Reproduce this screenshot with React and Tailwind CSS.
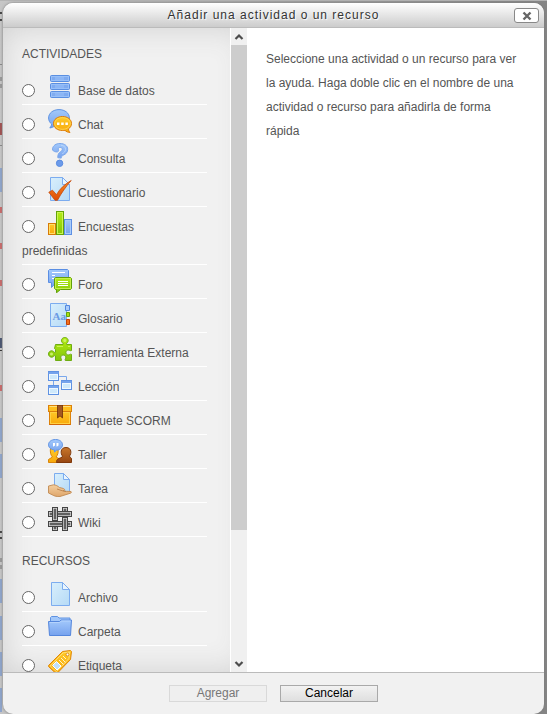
function Icon({ children }) {
  return (
    <svg
      viewBox="0 0 24 24"
      aria-hidden="true"
      className="mr-1.5 ml-[13px] inline-block h-6 w-6 align-[-4px]"
    >
      {children}
    </svg>
  );
}

function Gradients() {
  return (
    <svg className="absolute h-0 w-0" aria-hidden="true">
      <defs>
        <linearGradient id="blue" x1="0" y1="0" x2="0" y2="1">
          <stop offset="0" stopColor="#a3c9fb" />
          <stop offset="1" stopColor="#76a2ee" />
        </linearGradient>
        <linearGradient id="paper" x1="0" y1="0" x2="1" y2="1">
          <stop offset="0" stopColor="#d9effc" />
          <stop offset="1" stopColor="#b5daf6" />
        </linearGradient>
        <linearGradient id="gold" x1="0" y1="0" x2="0" y2="1">
          <stop offset="0" stopColor="#ffcb28" />
          <stop offset="1" stopColor="#f8a80c" />
        </linearGradient>
        <linearGradient id="green" x1="0" y1="0" x2="0" y2="1">
          <stop offset="0" stopColor="#b5ec14" />
          <stop offset="1" stopColor="#83c60a" />
        </linearGradient>
        <linearGradient id="orange" x1="0" y1="0" x2="0" y2="1">
          <stop offset="0" stopColor="#fb8b26" />
          <stop offset="1" stopColor="#dc4c06" />
        </linearGradient>
        <linearGradient id="brown" x1="0" y1="0" x2="0" y2="1">
          <stop offset="0" stopColor="#c8762a" />
          <stop offset="1" stopColor="#974611" />
        </linearGradient>
        <linearGradient id="skin" x1="0" y1="0" x2="0" y2="1">
          <stop offset="0" stopColor="#f4cf9f" />
          <stop offset="1" stopColor="#dfa66c" />
        </linearGradient>
      </defs>
    </svg>
  );
}

const Database = () => (
  <Icon>
    {[0.5, 8.5, 16.5].map((y) => (
      <g key={y}>
        <rect x="2.5" y={y} width="19" height="6" rx="1" fill="#709ee9" stroke="#5a8fe2" />
        <rect x="3.5" y={y + 1} width="17" height="4" fill="#7fabf0" stroke="#98c0f8" />
        <rect x="7" y={y + 1.5} width="9" height="3" fill="#8cb6f5" />
      </g>
    ))}
  </Icon>
);

const ChatIcon = () => (
  <Icon>
    <path d="M11 .6c6 0 10.400 3.600 10.400 8.400S17 17.400 11 17.400c-1.500 0-3-.3-4.200-.7-1.300 1.300-3 2-5 2.200 1-1 1.700-2.300 1.800-3.800C1.700 13.600.6 11.400.6 9 .6 4.200 5 .6 11 .6z" fill="url(#blue)" stroke="#5f93e2" />
    <path d="M14.500 7.500c5.200 0 9 3 9 7 0 2.300-1.200 4.100-3 5.400 0 1.400.6 2.500 1.500 3.500-2 0-3.800-.7-5-2.100-.8.200-1.600.2-2.500.2-5.200 0-9-3-9-7s3.800-7 9-7z" fill="url(#gold)" stroke="#dc7c0a" />
    <path d="M14.500 8.700c4.500 0 7.800 2.500 7.800 5.800s-3.300 5.800-7.800 5.800-7.800-2.500-7.800-5.800 3.300-5.800 7.800-5.800z" fill="none" stroke="#ffda5e" strokeWidth=".8" />
    <path d="M9 13.500h2.500v2.500H9zM13.200 13.500h2.500v2.500h-2.500zM17.400 13.500h2.500v2.500h-2.500z" fill="#fff" />
  </Icon>
);

const Question = () => (
  <Icon>
    <path d="M4.500 5.800C5 2.500 8 .5 12 .5c4.500 0 7.700 2.300 7.700 5.900 0 3-1.800 4.500-4.200 5.700-1.600.8-2.200 1.500-2.300 3l-3.400-.4c-.2-3 .9-4.700 2.700-6 1.200-.9 1.800-1.500 1.800-2.500 0-1.200-.9-1.800-2.200-1.800-1.200 0-1.800.6-1.800 1.500 0 .7.300 1.200.3 1.700 0 1-.9 1.500-2.500 1.300-2.200-.2-3.800-1.300-3.600-3.100z" fill="url(#blue)" stroke="#7ba7ea" />
    <path d="M13 2.300c3 .2 4.600 1.800 4.500 4.100-.1 2-1.200 3.200-3.200 4.300" fill="none" stroke="#b9d6fb" />
    <circle cx="11.600" cy="20.300" r="3.200" fill="#6c9bea" stroke="#5a8ce0" />
  </Icon>
);

const Paper = ({ x = 3 }) => (
  <g>
    <path d={`M${x - 0.5} .5H14.500L21.500 7.500V23.500H${x - 0.5}z`} fill="url(#paper)" stroke="#7cacef" />
    <path d="M14.500 .5V7.500H21.500z" fill="#e9f5fe" stroke="#7cacef" />
  </g>
);

const Quiz = () => (
  <Icon>
    <Paper />
    <path d="M.8 15.200l3.700-2 4 4.500C12 11.500 17 7 23.200 3.500 18 9.500 13.300 16 9.500 23.300H7z" fill="url(#orange)" stroke="#c54a0a" strokeWidth=".8" />
  </Icon>
);

const Survey = () => (
  <Icon>
    <rect x=".5" y="12.500" width="7" height="11" fill="url(#gold)" stroke="#d77b08" />
    <rect x="1.500" y="13.500" width="5" height="9" fill="none" stroke="#ffdf68" />
    <rect x="16.500" y="8.500" width="7" height="15" fill="url(#blue)" stroke="#5d90e4" />
    <rect x="17.500" y="9.500" width="5" height="13" fill="none" stroke="#a9ccfb" />
    <rect x="8.500" y=".5" width="7" height="23" fill="url(#green)" stroke="#65a307" />
    <rect x="9.500" y="1.500" width="5" height="21" fill="none" stroke="#caf454" />
  </Icon>
);

const Forum = () => (
  <Icon>
    <path d="M1.500.5h18l1 1v12H8L3.500 18.500V13.500H.5v-12z" fill="url(#blue)" stroke="#5a8ee3" />
    <path d="M4 3.500h13M4 6.500h3M4 9.500h2" stroke="#fff" />
    <path d="M7.500 8.500h15l1 1v10l-1 1H12.500L8.500 23.800V20.500h-1l-1-1v-10z" fill="url(#green)" stroke="#62a008" />
    <path d="M7.500 9.500h15v10h-15z" fill="none" stroke="#c6f04a" />
    <path d="M10 12.500h10M10 14.500h10M10 16.500h10" stroke="#fff" />
  </Icon>
);

const Glossary = () => (
  <Icon>
    <path d="M2.500.5h16v23h-16z" fill="url(#paper)" stroke="#7cacef" />
    <path d="M17.500 2.500h4v5h-4z" fill="#a9ccfb" stroke="#5288df" />
    <path d="M18.500 9.500h3v4h-3z" fill="#a7e014" stroke="#65a307" />
    <path d="M18.500 16.500h3v5h-3z" fill="#f1701c" stroke="#c64305" />
    <text x="4.500" y="16.500" fontSize="11" fontWeight="700" fill="#6b9ae4" className="font-['Liberation_Serif',serif]">Aa</text>
  </Icon>
);

const Puzzle = () => (
  <Icon>
    <path d="M7.500 7.500H15c.5-.8-.2-1.400-.9-2.100-1.500-1.700-.3-4.900 2.700-4.900s4.300 3.200 2.700 4.900c-.7.700-1.300 1.300-.8 2.100h4.800v6c-1.200.8-2-.8-3.500-.5-2.800.4-2.800 4.600 0 5 1.500.2 2.300-1.400 3.500-.6v6.100h-6.200c-.8-1.300.8-1.900.5-3.400-.4-2.700-4.600-2.700-5 0-.3 1.500 1.300 2.100.6 3.400H7.500v-4.700c-.8-.6-1.400.1-2.100.8C3.700 21 .5 19.800.5 17s3.200-4.100 4.900-2.500c.7.700 1.300 1.300 2.100.8v-2.800l-1-1z" fill="url(#green)" stroke="#6eac12" />
    <circle cx="16.800" cy="3.500" r="1.500" fill="#caf06a" />
    <circle cx="3.500" cy="17" r="1.500" fill="#caf06a" />
    <path d="M9 9.500h6M20 9.500h2" stroke="#caf454" />
  </Icon>
);

const Lesson = () => (
  <Icon>
    <path d="M10 5.500h8.500V10M5.500 9v6" fill="none" stroke="#7ba8ec" />
    {[[0.5, 0.5], [13.5, 9.5], [0.5, 14.5]].map(([x, y]) => (
      <g key={y}>
        <rect x={x} y={y} width="10" height="9" fill="#cfe9fb" stroke="#5f92e3" />
        <path d={`M${x} ${y + 1.5}h10`} stroke="#75a3ec" strokeWidth="2" />
        <rect x={x + 1} y={y + 3} width="8" height="5" fill="none" stroke="#eef8ff" />
      </g>
    ))}
  </Icon>
);

const Package = () => (
  <Icon>
    <rect x="1.500" y="5.500" width="21" height="14" fill="url(#gold)" stroke="#dc8109" />
    <rect x="2.500" y="7.500" width="19" height="11" fill="none" stroke="#ffd143" />
    <rect x=".5" y=".5" width="23" height="6" fill="#ffbf1e" stroke="#dc8109" />
    <path d="M1.500 1.500h21" stroke="#ffe07a" />
    <path d="M1.500 19.500h21" stroke="#d26808" />
    <path d="M9.500 0h5v13l-2.500-2.200L9.500 13z" fill="#974b17" stroke="#6f310b" strokeWidth=".8" />
    <path d="M11 1v10M13 1v10" stroke="#bb7436" strokeWidth=".7" />
  </Icon>
);

const Workshop = () => (
  <Icon>
    <path d="M.5 23.500V20.500l4-2.500C2.500 16 2 13 2.500 9h7.500c.5 4 0 7-2 9l4.500 2.500v3z" fill="url(#gold)" stroke="#d8850b" />
    <path d="M8.500 23.500c0-3 .8-3.500 5.500-5.200l.5-1.300c-2-2-2.500-8.500 3.500-8.500s5.500 6.500 3.500 8.500l.5 1.300c1 .4 1.500.8 1.500 1.700v3.500z" fill="url(#brown)" stroke="#80390b" />
    <path d="M7.500.5c4.200 0 7 2.300 7 5.300s-2.800 5.400-6 5.400L6.500 13V11C3 10.500.5 8.600.5 5.800.5 2.800 3.300.5 7.500.5z" fill="url(#blue)" stroke="#6295e4" />
    <path d="M5 4h2v2.500L5.500 7.500H5zM8.500 4h2v2.500L9 7.500h-.5z" fill="#fff" />
  </Icon>
);

const Assignment = () => (
  <Icon>
    <path d="M6.500.5h9l6 6v12.500h-15z" fill="url(#paper)" stroke="#7cacef" />
    <path d="M15.500.5v6h6z" fill="#e9f5fe" stroke="#7cacef" />
    <path d="M.5 13l5-1.200c2.500.2 4.200 1.200 6 2.700l4 1c1.500.6 1.500 2-.3 2.200l3 .6 4.800.2c.8.600.5 1.200-.5 1.700L12 23.500c-3 .3-5.500-.3-8-1.800L.5 20z" fill="url(#skin)" stroke="#c18a52" strokeWidth=".9" />
    <path d="M9 16l5 1.700 4 .8" fill="none" stroke="#b57b47" strokeWidth=".8" />
  </Icon>
);

const strands = [
  [14.5, 0.5, 5, 9],
  [4.5, 14.5, 5, 9],
  [0.5, 4.5, 23, 5],
  [0.5, 14.5, 23, 5],
  [4.5, 0.5, 5, 13],
  [14.5, 10.5, 5, 13],
];

const Wiki = () => (
  <Icon>
    {strands.map(([x, y, w, h]) => (
      <g key={`${x}-${y}-${h}`}>
        <rect x={x} y={y} width={w} height={h} fill="#d8d8d8" stroke="#444" />
        <rect x={x + 1.2} y={y + 1.2} width={w - 2.4} height={h - 2.4} fill="#606060" />
      </g>
    ))}
  </Icon>
);

const File = () => (
  <Icon>
    <Paper x={4} />
  </Icon>
);

const Folder = () => (
  <Icon>
    <path d="M2.500 1.500l1-1h6l1.500 1.500h11v6h-19.500z" fill="#a3c8fa" stroke="#5f92e2" />
    <path d="M.5 5.500h11l1.500-1.500h10.500l-1 15.500h-21z" fill="url(#blue)" stroke="#5486dc" />
    <path d="M1.700 6.500h10.200L13.400 5h9" fill="none" stroke="#b5d3fc" />
  </Icon>
);

const Tag = () => (
  <Icon>
    <path d="M.5 15.500L14.500 1.500l8-1 1 1-1 8-13.500 14h-1L.5 16.500z" fill="url(#gold)" stroke="#e08609" />
    <path d="M2.200 16L15.200 2.800l6.500-.8-.8 6.500L8.500 21.700z" fill="none" stroke="#ffdf75" />
    <path d="M4.500 15.500l4-4 4.500 4.500-4 4z" fill="#c2e0fa" stroke="#fff" />
    <path d="M11 10l4.500 4.500M13 8l4.500 4.500M15 6l3 3" stroke="#fff3c7" />
    <circle cx="19.500" cy="4.500" r="1.400" fill="#fff" stroke="#d47c08" strokeWidth=".8" />
  </Icon>
);

const groups = [
  {
    title: "ACTIVIDADES",
    items: [
      ["Base de datos", Database],
      ["Chat", ChatIcon],
      ["Consulta", Question],
      ["Cuestionario", Quiz],
      ["Encuestas predefinidas", Survey],
      ["Foro", Forum],
      ["Glosario", Glossary],
      ["Herramienta Externa", Puzzle],
      ["Lección", Lesson],
      ["Paquete SCORM", Package],
      ["Taller", Workshop],
      ["Tarea", Assignment],
      ["Wiki", Wiki],
    ],
  },
  {
    title: "RECURSOS",
    items: [
      ["Archivo", File],
      ["Carpeta", Folder],
      ["Etiqueta", Tag],
    ],
  },
];

function Option({ label, Glyph }) {
  return (
    <li className="border-b border-white pt-1 pb-px">
      <label className="block pr-3">
        <input
          type="radio"
          name="module"
          className="h-[13px] w-[13px] appearance-none rounded-full border border-[#666] bg-white align-[-2px] checked:border-4"
        />
        <Glyph />
        {label}
      </label>
    </li>
  );
}

/* Slivers of the dimmed course page that show beside the dialog. */
const slivers = [
  "top-[12px] h-[2px] bg-[#444]",
  "top-[19px] h-[2px] bg-[#444]",
  "top-[64px] h-px bg-[#888]",
  "top-[77px] h-[4px] bg-[#999]",
  "top-[84px] h-[4px] bg-[#999]",
  "top-[123px] h-[12px] bg-[#a05050]",
  "top-[145px] h-px bg-[#888]",
  "top-[168px] h-[24px] bg-[#8fa5cc]",
  "top-[207px] h-[6px] bg-[#c96a6a]",
  "top-[243px] h-[6px] bg-[#c96a6a]",
  "top-[280px] h-[6px] bg-[#c96a6a]",
  "top-[338px] h-[10px] bg-[#4a5570]",
  "top-[350px] h-px bg-[#333]",
  "top-[385px] h-[6px] bg-[#c96a6a]",
  "top-[418px] h-[24px] bg-[#8fa5cc]",
  "top-[454px] h-[24px] bg-[#8fa5cc]",
  "top-[531px] h-[2px] bg-[#444]",
  "top-[537px] h-[2px] bg-[#444]",
  "top-[558px] h-[4px] bg-[#999]",
  "top-[565px] h-[4px] bg-[#999]",
  "top-[579px] h-[24px] bg-[#8fa5cc]",
  "top-[616px] h-[24px] bg-[#8fa5cc]",
  "top-[652px] h-[24px] bg-[#8fa5cc]",
  "top-[688px] h-[24px] bg-[#8fa5cc]",
];

function Chevron({ d }) {
  return (
    <svg viewBox="0 0 16 17" className="h-[17px] w-4" aria-hidden="true">
      <path d={d} fill="none" stroke="#4d4d4d" strokeWidth="2.200" />
    </svg>
  );
}

export default function App() {
  return (
    <div className="relative h-screen overflow-hidden bg-linear-to-r from-[#c6c6c6] to-[#858585] px-[3px] pt-[3px] font-['Liberation_Sans',Arial,sans-serif] text-[12px] leading-6 text-[#555]">
      <Gradients />
      <div className="absolute top-0 left-0 h-px w-full bg-[#b4b4b4]" />
      {slivers.map((place) => (
        <span key={place} className={`absolute left-0 w-0.5 ${place}`} />
      ))}
      <div
        role="dialog"
        aria-labelledby="dialog-title"
        className="relative flex h-full flex-col overflow-hidden rounded-[10px] bg-[#f1f1f1] shadow-[0_0_3px_#777]"
      >
        <header className="relative flex h-[25px] shrink-0 items-center justify-center border-b border-[#bbb] bg-linear-to-b from-white to-[#ccc]">
          <h1
            id="dialog-title"
            className="tracking-[1px] text-[#333] [text-shadow:1px_1px_1px_#fff]"
          >
            Añadir una actividad o un recurso
          </h1>
          <button
            type="button"
            aria-label="Cerrar"
            className="absolute top-[5px] right-[5px] flex h-[15px] w-[25px] items-center justify-center rounded-[3px] border border-[#888] bg-white"
          >
            <svg viewBox="0 0 10 10" className="h-2.5 w-2.5" aria-hidden="true">
              <path d="M1.500 1.500l7 7M8.500 1.500l-7 7" stroke="#666" strokeWidth="2.400" />
            </svg>
          </button>
        </header>

        <div className="flex min-h-0 flex-1">
          <div className="flex w-[244px] shrink-0 shadow-[inset_0_0_30px_#d0d0d0]">
            <form className="min-w-0 flex-1 overflow-hidden pt-3.5 pr-[23px] pl-[19px]">
              {groups.map(({ title, items }) => (
                <section key={title} className="mb-3">
                  <h2 className="mb-[5px]">{title}</h2>
                  <ul>
                    {items.map(([label, Glyph]) => (
                      <Option key={label} label={label} Glyph={Glyph} />
                    ))}
                  </ul>
                </section>
              ))}
            </form>

            <div className="flex w-[17px] shrink-0 flex-col items-center border-l border-white bg-[#f0f0f0]">
              <Chevron d="M4.500 11L8 7.500l3.500 3.500" />
              <div className="w-full flex-1">
                <div className="h-[79.5%] w-full bg-[#cdcdcd]" />
              </div>
              <Chevron d="M4.500 7L8 10.500 11.500 7" />
            </div>
          </div>

          <section className="min-w-0 flex-1 bg-white px-[19px] pt-[19px]">
            <p>
              Seleccione una actividad o un recurso para ver la ayuda. Haga doble
              clic en el nombre de una actividad o recurso para añadirla de forma
              rápida
            </p>
          </section>
        </div>

        <footer className="flex h-[42px] shrink-0 items-center justify-center gap-[13px] border-t border-[#bbb]">
          <button
            type="button"
            disabled
            className="h-[17px] w-[98px] border border-[#d9d9d9] bg-[#efefef] leading-[15px] text-[#777]"
          >
            Agregar
          </button>
          <button
            type="button"
            className="h-[17px] w-[98px] border border-[#a9a9a9] bg-linear-to-b from-[#f2f2f2] to-[#dfdfdf] leading-[15px] text-black"
          >
            Cancelar
          </button>
        </footer>
      </div>
    </div>
  );
}
